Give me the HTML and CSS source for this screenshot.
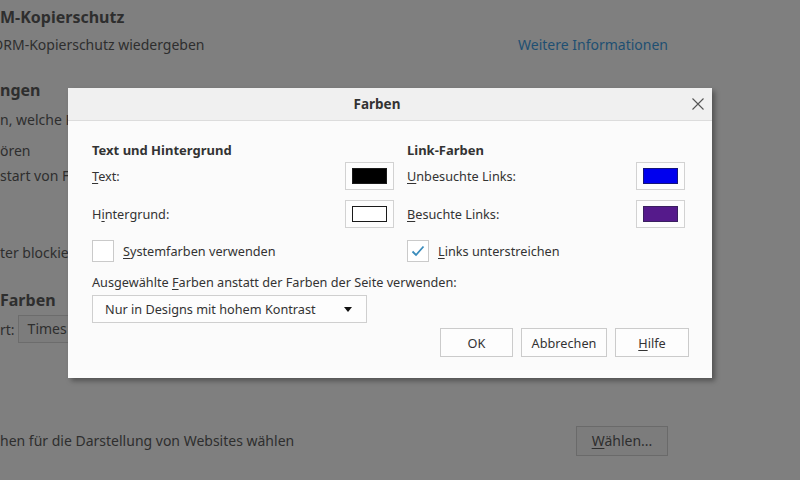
FILE: index.html
```html
<!DOCTYPE html>
<html lang="de">
<head>
  <meta charset="UTF-8">
  <title>Einstellungen – Farben</title>
  <link rel="stylesheet" href="styles.css">
</head>
<body>

  <!-- settings page behind the modal (dimmed) -->
  <main class="page">
    <h2 class="sec-title first">M-Kopierschutz</h2>
    <div class="row">
      <span class="cut">DRM-Kopierschutz wiedergeben</span>
      <a class="more" href="#">Weitere Informationen</a>
    </div>

    <h2 class="sec-title">ngen</h2>
    <p class="line l-welche">n, welche Erweiterungen</p>
    <p class="line l-oeren">ören</p>
    <p class="line">start von Firefox</p>
    <p class="line l-blockie">ter blockieren</p>

    <h2 class="sec-title l-farben">Farben</h2>
    <div class="font-row">
      <span>rt:</span>
      <span class="page-select">Times</span>
    </div>

    <div class="row l-waehlen">
      <span>hen für die Darstellung von Websites wählen</span>
      <button class="page-btn"><u>W</u>ählen...</button>
    </div>
  </main>

  <!-- Farben dialog -->
  <div class="dialog">
    <div class="dlg-head">
      <span class="dlg-title">Farben</span>
      <button class="dlg-close" aria-label="Schließen">
        <svg width="12" height="12" viewBox="0 0 12 12">
          <path d="M0.5 0.5 L11.5 11.5 M11.5 0.5 L0.5 11.5" stroke="#555" stroke-width="1.1" fill="none"/>
        </svg>
      </button>
    </div>

    <div class="dlg-body">
      <div class="cols">
        <div class="col col-left">
          <h3 class="group">Text und Hintergrund</h3>
          <div class="color-row">
            <span><u>T</u>ext:</span>
            <span class="swatch-btn"><span class="swatch sw-black"></span></span>
          </div>
          <div class="color-row">
            <span>H<u>i</u>ntergrund:</span>
            <span class="swatch-btn"><span class="swatch sw-white"></span></span>
          </div>
          <label class="check">
            <span class="box"></span>
            <span><u>S</u>ystemfarben verwenden</span>
          </label>
        </div>

        <div class="col col-right">
          <h3 class="group">Link-Farben</h3>
          <div class="color-row">
            <span><u>U</u>nbesuchte Links:</span>
            <span class="swatch-btn"><span class="swatch sw-blue"></span></span>
          </div>
          <div class="color-row">
            <span><u>B</u>esuchte Links:</span>
            <span class="swatch-btn"><span class="swatch sw-purple"></span></span>
          </div>
          <label class="check">
            <span class="box">
              <svg width="14" height="12" viewBox="0 0 14 12">
                <path d="M1.5 6.5 L5 10 L12.5 1.5" stroke="#3a8cbc" stroke-width="1.8" fill="none"/>
              </svg>
            </span>
            <span><u>L</u>inks unterstreichen</span>
          </label>
        </div>
      </div>

      <p class="use-label">Ausgewählte <u>F</u>arben anstatt der Farben der Seite verwenden:</p>
      <div class="select">
        <span>Nur in Designs mit hohem Kontrast</span>
        <span class="caret"></span>
      </div>

      <div class="actions">
        <button class="btn btn-ok">OK</button>
        <button class="btn btn-cancel">Abbrechen</button>
        <button class="btn btn-help"><u>H</u>ilfe</button>
      </div>
    </div>
  </div>

</body>
</html>
```

FILE: styles.css
```css
body {
  margin: 0;
  width: 800px;
  height: 480px;
  overflow: hidden;
  background: #7f7f7f;
  font-family: "Noto Sans", "Open Sans", sans-serif;
  color: #2e2e2e;
  position: relative;
}

u {
  text-decoration: underline;
  text-underline-offset: 2px;
}

/* ---- page behind the overlay ---- */
.page {
  width: 668px;
  font-size: 14px;
}

.sec-title {
  margin: 0;
  font-size: 16px;
  font-weight: bold;
  line-height: 20px;
  margin-top: 25px;
}

.sec-title.first {
  margin-top: 7px;
}

.row {
  display: flex;
  justify-content: space-between;
  align-items: center;
  margin-top: 8px;
  line-height: 20px;
}

.cut {
  margin-left: -7px;
}

.more {
  color: #1e4f72;
  text-decoration: none;
}

.line {
  margin: 0;
  line-height: 20px;
}

.l-welche { margin-top: 10px; }
.l-oeren { margin-top: 11px; }
.l-oeren + .line { margin-top: 5px; }
.l-blockie { margin-top: 57px; }
.l-farben { margin-top: 27px; }

.font-row {
  display: flex;
  align-items: center;
  gap: 3px;
  margin-top: 5px;
}

.page-select {
  display: inline-block;
  width: 60px;
  height: 26px;
  line-height: 26px;
  padding-left: 9px;
  border: 1px solid #6c6c6c;
  background: #7c7c7c;
}

.l-waehlen {
  margin-top: 83px;
}

.page-btn {
  width: 92px;
  height: 30px;
  font: inherit;
  color: inherit;
  background: #7c7c7c;
  border: 1px solid #6a6a6a;
}

/* ---- modal dialog ---- */
.dialog {
  position: absolute;
  left: 68px;
  top: 88px;
  width: 644px;
  height: 290px;
  background: #fbfbfb;
  box-shadow: 3px 3px 5px rgba(0, 0, 0, 0.35);
  font-size: 12.7px;
  color: #333;
}

.dlg-head {
  height: 32px;
  background: #f0f0f0;
  border-bottom: 1px solid #dcdcdc;
  display: flex;
  align-items: center;
  justify-content: center;
  position: relative;
}

.dlg-title {
  font-weight: bold;
  font-size: 13.5px;
  margin-right: 26px;
}

.dlg-close {
  position: absolute;
  right: 8px;
  top: 10px;
  border: none;
  background: none;
  padding: 0;
  width: 12px;
  height: 12px;
  display: flex;
}

.dlg-body {
  padding: 20px 23px 0 24px;
}

.cols {
  display: grid;
  grid-template-columns: 302px 278px;
  column-gap: 13px;
}

.group {
  margin: 0;
  font-size: 13px;
  font-weight: bold;
  line-height: 18px;
}

.color-row {
  display: flex;
  justify-content: space-between;
  align-items: center;
  margin-top: 3px;
}

.color-row + .color-row {
  margin-top: 10px;
}

.swatch-btn {
  width: 47px;
  height: 26px;
  border: 1px solid #d2d2d2;
  background: #fdfdfd;
  display: flex;
  align-items: center;
  justify-content: center;
}

.swatch {
  width: 33px;
  height: 14px;
  border: 1px solid #1a1a1a;
}

.sw-black { background: #000; }
.sw-white { background: #fff; }
.sw-blue { background: #0000ee; border-color: #15157a; }
.sw-purple { background: #551a8b; border-color: #3a2060; }

.check {
  display: flex;
  align-items: center;
  gap: 9px;
  margin-top: 12px;
}

.box {
  width: 20px;
  height: 20px;
  border: 1px solid #cacaca;
  background: #fff;
  display: flex;
  align-items: center;
  justify-content: center;
}

.use-label {
  margin: 11px 0 0;
  line-height: 18px;
}

.select {
  height: 26px;
  margin-top: 4px;
  padding: 0 12px;
  border: 1px solid #cfcfcf;
  background: #fdfdfd;
  display: flex;
  align-items: center;
  justify-content: space-between;
  box-sizing: content-box;
  width: 249px;
}

.caret {
  width: 0;
  height: 0;
  border-left: 4px solid transparent;
  border-right: 4px solid transparent;
  border-top: 5px solid #111;
  margin-right: 2px;
}

.actions {
  display: flex;
  justify-content: flex-end;
  gap: 8px;
  margin-top: 5px;
}

.btn {
  height: 29px;
  font: inherit;
  color: #333;
  background: #fdfdfd;
  border: 1px solid #cbcbcb;
  padding: 0;
}

.btn-ok { width: 73px; }
.btn-cancel { width: 86px; }
.btn-help { width: 74px; }
```
